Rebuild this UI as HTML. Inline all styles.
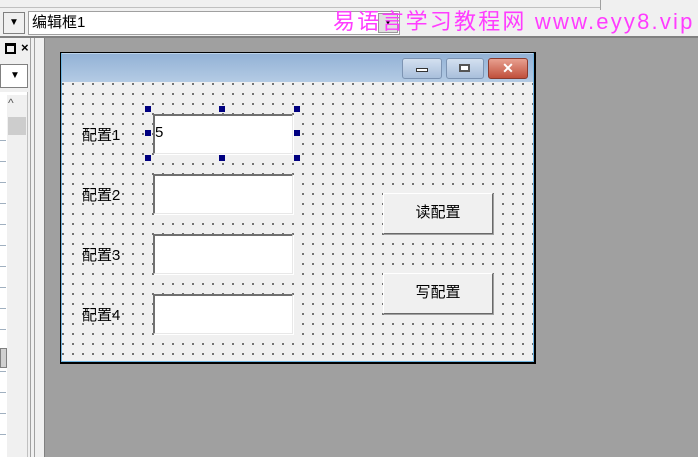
<!DOCTYPE html>
<html><head><meta charset="utf-8"><style>
*{margin:0;padding:0;box-sizing:border-box}
body{width:698px;height:457px;overflow:hidden;background:#a0a0a0;position:relative;font-family:"Liberation Sans","Noto Sans CJK SC",sans-serif;font-size:13px;color:#000}
.a{position:absolute}
.grid{background-color:#f0f0f0;background-image:radial-gradient(circle,#000 0.7px,transparent 0.9px);background-size:10px 10px}
.edit{position:absolute;background:#fff;border-top:2px solid #707070;border-left:2px solid #707070;border-right:1px solid #e8e8e8;border-bottom:1px solid #e8e8e8;box-shadow:1px 1px 0 #fff}
.lbl{position:absolute;font-size:15px}
.btn{position:absolute;background:#f0f0f0;border:1px solid;border-color:#fff #696969 #696969 #fff;box-shadow:1px 1px 0 #a0a0a0;text-align:center;font-size:15px;line-height:38px}
.h{position:absolute;width:6px;height:6px;background:#000080}
</style></head><body>
<div class="a" style="left:0;top:0;width:698px;height:37px;background:#f0f0f0"></div>
<div class="a" style="left:0;top:0;width:600px;height:8px;border-bottom:1px solid #c0c0c0"></div>
<div class="a" style="left:600px;top:0;width:1px;height:10px;background:#a0a0a0"></div>
<div class="a" style="left:0;top:36px;width:698px;height:2px;background:#808080"></div>
<div class="a" style="left:3px;top:12px;width:22px;height:22px;border:1px solid #808080;background:#f0f0f0;font-size:10px;text-align:center;line-height:20px">▼</div>
<div class="a" style="left:28px;top:11px;width:372px;height:24px;background:#fff;border:1px solid #a0a0a0;padding-left:3px;line-height:22px;font-size:15px">编辑框1</div>
<div class="a" style="left:378px;top:13px;width:20px;height:20px;background:#e0e0e0;border:1px solid #999;font-size:8px;text-align:center;line-height:18px">▼</div>
<div class="a" style="left:333px;top:4px;font-size:22px;color:#ff3cff;font-family:'Liberation Sans','Noto Sans CJK SC',sans-serif;letter-spacing:2.2px;white-space:nowrap">易语言学习教程网 www.eyy8.vip</div>
<div class="a" style="left:0;top:38px;width:45px;height:419px;background:#f0f0f0"></div>
<div class="a" style="left:30px;top:38px;width:1px;height:419px;background:#a0a0a0"></div>
<div class="a" style="left:34px;top:38px;width:1px;height:419px;background:#a0a0a0"></div>
<div class="a" style="left:44px;top:38px;width:1px;height:419px;background:#808080"></div>
<div class="a" style="left:5px;top:43px;width:11px;height:11px;border:2px solid #000;border-top-width:3px"></div>
<div class="a" style="left:21px;top:40px;font-size:13px;font-weight:bold">×</div>
<div class="a" style="left:0;top:64px;width:28px;height:24px;background:#fff;border:1px solid #808080"></div>
<div class="a" style="left:10px;top:70px;font-size:10px">▼</div>
<div class="a" style="left:0;top:92px;width:28px;height:365px;background:#fff;border-right:1px solid #c0c0c0"></div>
<div class="a" style="left:7px;top:95px;width:20px;height:362px;background:#f0f0f0"></div>
<div class="a" style="left:8px;top:96px;font-size:12px;color:#555">^</div>
<div class="a" style="left:8px;top:117px;width:18px;height:18px;background:#cdcdcd"></div>
<div class="a" style="left:0;top:120px;width:6px;height:320px;background:repeating-linear-gradient(#fff 0 20px,#a0b0c0 20px 21px)"></div>
<div class="a" style="left:0;top:348px;width:7px;height:20px;background:#d0d0d0;border:1px solid #808080"></div>
<div class="a" style="left:60px;top:52px;width:476px;height:312px;background:#000"></div>
<div class="a" style="left:61px;top:53px;width:473px;height:309px;border:1px solid #6fb4e0;border-top:none;background:#bcd3ea"></div>
<div class="a" style="left:62px;top:54px;width:471px;height:28px;background:linear-gradient(#93b2d6,#b4cbe4)"></div>
<div class="a" style="left:402px;top:58px;width:40px;height:21px;border:1px solid #7d94b3;border-radius:3px;background:linear-gradient(#d3e0f0,#a9bfdb)"></div>
<div class="a" style="left:416px;top:68px;width:12px;height:4px;background:#fff;border:1px solid #333"></div>
<div class="a" style="left:446px;top:58px;width:38px;height:21px;border:1px solid #7d94b3;border-radius:3px;background:linear-gradient(#d3e0f0,#a9bfdb)"></div>
<div class="a" style="left:459px;top:64px;width:11px;height:8px;background:#fff;border:2px solid #555"></div>
<div class="a" style="left:488px;top:58px;width:40px;height:21px;border:1px solid #8a3a2e;border-radius:3px;background:linear-gradient(#e8a090,#c0503c);color:#fff;text-align:center;font-weight:bold;font-size:14px;line-height:19px">✕</div>
<div class="a grid" style="left:62px;top:82px;width:471px;height:279px;background-position:-4px -3px"></div>
<div class="lbl" style="left:82px;top:124px">配置1</div>
<div class="lbl" style="left:82px;top:184px">配置2</div>
<div class="lbl" style="left:82px;top:244px">配置3</div>
<div class="lbl" style="left:82px;top:304px">配置4</div>
<div class="edit" style="left:153px;top:114px;width:140px;height:40px;font-size:15px;line-height:34px">5</div>
<div class="edit" style="left:153px;top:174px;width:140px;height:40px"></div>
<div class="edit" style="left:153px;top:234px;width:140px;height:40px"></div>
<div class="edit" style="left:153px;top:294px;width:140px;height:40px"></div>
<div class="h" style="left:145px;top:106px"></div><div class="h" style="left:219px;top:106px"></div><div class="h" style="left:294px;top:106px"></div>
<div class="h" style="left:145px;top:130px"></div><div class="h" style="left:294px;top:130px"></div>
<div class="h" style="left:145px;top:155px"></div><div class="h" style="left:219px;top:155px"></div><div class="h" style="left:294px;top:155px"></div>
<div class="btn" style="left:383px;top:193px;width:110px;height:41px">读配置</div>
<div class="btn" style="left:383px;top:273px;width:110px;height:41px">写配置</div>
</body></html>
